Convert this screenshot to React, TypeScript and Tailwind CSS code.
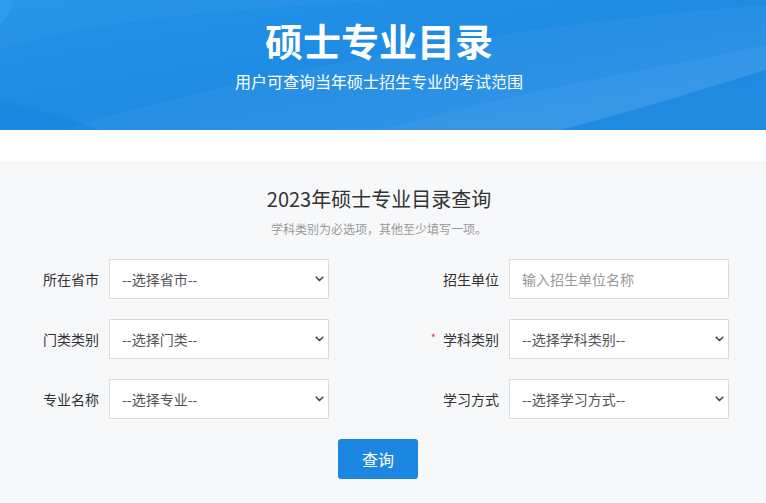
import React from "react";

const font = { fontFamily: '"Microsoft YaHei", "Noto Sans CJK SC", "Noto Sans", sans-serif' };

function Chevron() {
  return (
    <svg className="pointer-events-none absolute right-[5px] top-1/2 -translate-y-1/2" width="9" height="6" viewBox="0 0 9 6">
      <path d="M1.2 1.2 L4.5 4.5 L7.8 1.2" fill="none" stroke="#444" strokeWidth="1.6" strokeLinecap="round" strokeLinejoin="round" />
    </svg>
  );
}

function SelectBox({ text }: { text: string }) {
  return (
    <div className="relative w-[220px] h-[40px]">
      <select
        className="w-full h-full appearance-none bg-white border border-[#dcdcdc] pl-[12px] pr-[28px] text-[14px] text-[#555] outline-none"
        style={font}
        defaultValue=""
      >
        <option value="">{text}</option>
      </select>
      <Chevron />
    </div>
  );
}

function Field({ label, required, children }: { label: string; required?: boolean; children: React.ReactNode }) {
  return (
    <div className="flex items-center w-[400px] shrink-0">
      <div className="w-[109px] pr-[10px] flex justify-end items-center text-[14px] text-[#333]">
        {required && <span className="text-[#e04040] text-[11px] mr-[7px] -mt-[3px]">*</span>}
        <span>{label}</span>
      </div>
      {children}
    </div>
  );
}

export default function App() {
  return (
    <div className="w-[766px] h-[503px] overflow-hidden bg-white" style={font}>
      <div className="relative h-[130px] bg-[#1e8ae3] overflow-hidden">
        <svg className="absolute inset-0" width="766" height="130" viewBox="0 0 766 130" preserveAspectRatio="none">
          <defs>
            <linearGradient id="bg" x1="0" y1="0" x2="1" y2="1">
              <stop offset="0" stopColor="#2192e8" />
              <stop offset="0.5" stopColor="#1f8be3" />
              <stop offset="1" stopColor="#2a92e5" />
            </linearGradient>
          </defs>
          <rect width="766" height="130" fill="url(#bg)" />
          <circle cx="-30" cy="-10" r="45" fill="#2a9cf0" opacity="0.7" />
          <path d="M0 50 C 120 10, 300 5, 766 -20 L766 -40 L0 -40 Z" fill="#ffffff" opacity="0.03" />
          <path d="M60 130 C 300 60, 560 20, 766 5 L766 130 Z" fill="#ffffff" opacity="0.04" />
          <path d="M380 130 C 520 90, 650 70, 766 45 L766 130 Z" fill="#ffffff" opacity="0.04" />
          <path d="M560 130 C 640 110, 700 90, 766 70 L766 130 Z" fill="#1584dc" opacity="0.7" />
          <path d="M0 130 L0 100 C 60 115, 90 125, 100 130 Z" fill="#1684dd" opacity="0.5" />
        </svg>
        <div className="relative flex flex-col items-center text-white pr-[8px]">
          <div className="mt-[16px] text-[38px] leading-[48px] font-bold">硕士专业目录</div>
          <div className="mt-[6px] text-[16px] leading-[22px]">用户可查询当年硕士招生专业的考试范围</div>
        </div>
      </div>
      <div className="h-[31px] bg-white" />
      <div className="bg-[#f7f8fa] h-[342px]">
        <div className="flex flex-col items-center pr-[8px]">
          <div className="mt-[25px] text-[20px] leading-[26px] text-[#333]">2023年硕士专业目录查询</div>
          <div className="mt-[9px] text-[12px] leading-[16px] text-[#999]">学科类别为必选项，其他至少填写一项。</div>
        </div>
        <div className="mt-[22px] flex flex-col gap-[20px]">
          <div className="flex">
            <Field label="所在省市">
              <SelectBox text="--选择省市--" />
            </Field>
            <Field label="招生单位">
              <input
                className="w-[220px] h-[40px] bg-white border border-[#dcdcdc] px-[12px] text-[14px] text-[#555] placeholder:text-[#999] outline-none"
                style={font}
                placeholder="输入招生单位名称"
              />
            </Field>
          </div>
          <div className="flex">
            <Field label="门类类别">
              <SelectBox text="--选择门类--" />
            </Field>
            <Field label="学科类别" required>
              <SelectBox text="--选择学科类别--" />
            </Field>
          </div>
          <div className="flex">
            <Field label="专业名称">
              <SelectBox text="--选择专业--" />
            </Field>
            <Field label="学习方式">
              <SelectBox text="--选择学习方式--" />
            </Field>
          </div>
        </div>
        <div className="mt-[20px] pl-[338px]">
          <button className="w-[80px] h-[40px] rounded-[3px] bg-[#1b87e0] text-white text-[16px]" style={font}>
            查询
          </button>
        </div>
      </div>
    </div>
  );
}
